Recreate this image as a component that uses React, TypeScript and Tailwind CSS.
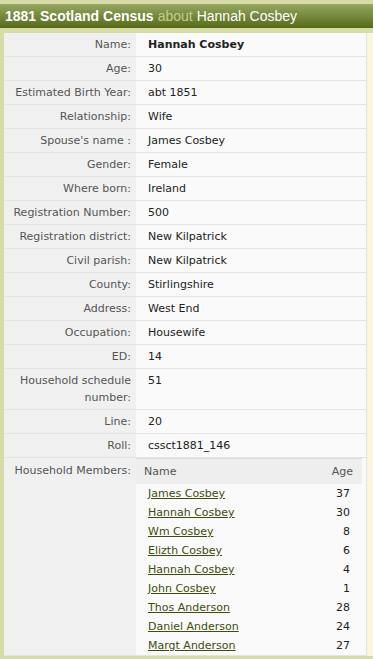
import React from "react";

const rows: [string, string][] = [
  ["Name:", "Hannah Cosbey"],
  ["Age:", "30"],
  ["Estimated Birth Year:", "abt 1851"],
  ["Relationship:", "Wife"],
  ["Spouse's name :", "James Cosbey"],
  ["Gender:", "Female"],
  ["Where born:", "Ireland"],
  ["Registration Number:", "500"],
  ["Registration district:", "New Kilpatrick"],
  ["Civil parish:", "New Kilpatrick"],
  ["County:", "Stirlingshire"],
  ["Address:", "West End"],
  ["Occupation:", "Housewife"],
  ["ED:", "14"],
  ["Household schedule number:", "51"],
  ["Line:", "20"],
  ["Roll:", "cssct1881_146"],
];

const members: [string, string][] = [
  ["James Cosbey", "37"],
  ["Hannah Cosbey", "30"],
  ["Wm Cosbey", "8"],
  ["Elizth Cosbey", "6"],
  ["Hannah Cosbey", "4"],
  ["John Cosbey", "1"],
  ["Thos Anderson", "28"],
  ["Daniel Anderson", "24"],
  ["Margt Anderson", "27"],
];

export default function App() {
  return (
    <div className="w-[373px] h-[659px] overflow-hidden bg-[#d6dba7] pt-[4px] font-['DejaVu_Sans',Verdana,sans-serif] text-[11px]">
      {/* Title bar */}
      <div className="h-[24px] bg-gradient-to-b from-[#97a862] to-[#566a12] flex items-center pl-[5px] font-['Liberation_Sans',Arial,sans-serif] text-[14px] text-white">
        <span className="font-bold">1881 Scotland Census</span>
        <span className="ml-[4px] text-[#c5cc8f]">about</span>
        <span className="ml-[4px]">Hannah Cosbey</span>
      </div>

      <div className="flex mt-[5px]">
        <div className="w-[4px] shrink-0" />
        <div className="w-[363px] shrink-0 bg-[#fafafa] border-r border-[#e2e2e2]">
          {rows.map(([label, value]) => (
            <div key={label} className="flex border-b border-[#e4e4e4] leading-[17px]">
              <div className="w-[132px] shrink-0 bg-[#f0f0f0] text-right text-[#555] pr-[5px] pl-[2px] py-[3px]">
                {label}
              </div>
              <div
                className={
                  "pl-[12px] py-[3px] text-[#222] " +
                  (label === "Name:" ? "font-bold" : "")
                }
              >
                {value}
              </div>
            </div>
          ))}

          {/* Household members */}
          <div className="flex border-b border-[#e4e4e4] leading-[17px]">
            <div className="w-[132px] shrink-0 bg-[#f0f0f0] text-right text-[#555] pr-[5px] pt-[4px]">
              Household Members:
            </div>
            <div className="w-[226px] shrink-0 border-t border-[#dcdcdc]">
              <div className="flex justify-between bg-[#eeeeee] text-[#555] h-[25px] items-center pl-[8px] pr-[9px]">
                <span>Name</span>
                <span>Age</span>
              </div>
              {members.map(([n, a], i) => (
                <div key={i} className="flex justify-between h-[19px] items-center pl-[12px] pr-[12px]">
                  <a href="#" className="text-[#3f4d0a] underline decoration-[#3f4d0a]">
                    {n}
                  </a>
                  <span className="text-[#222]">{a}</span>
                </div>
              ))}
            </div>
          </div>
        </div>
        <div className="flex-1 bg-[#fcf6dd]" />
      </div>
    </div>
  );
}
